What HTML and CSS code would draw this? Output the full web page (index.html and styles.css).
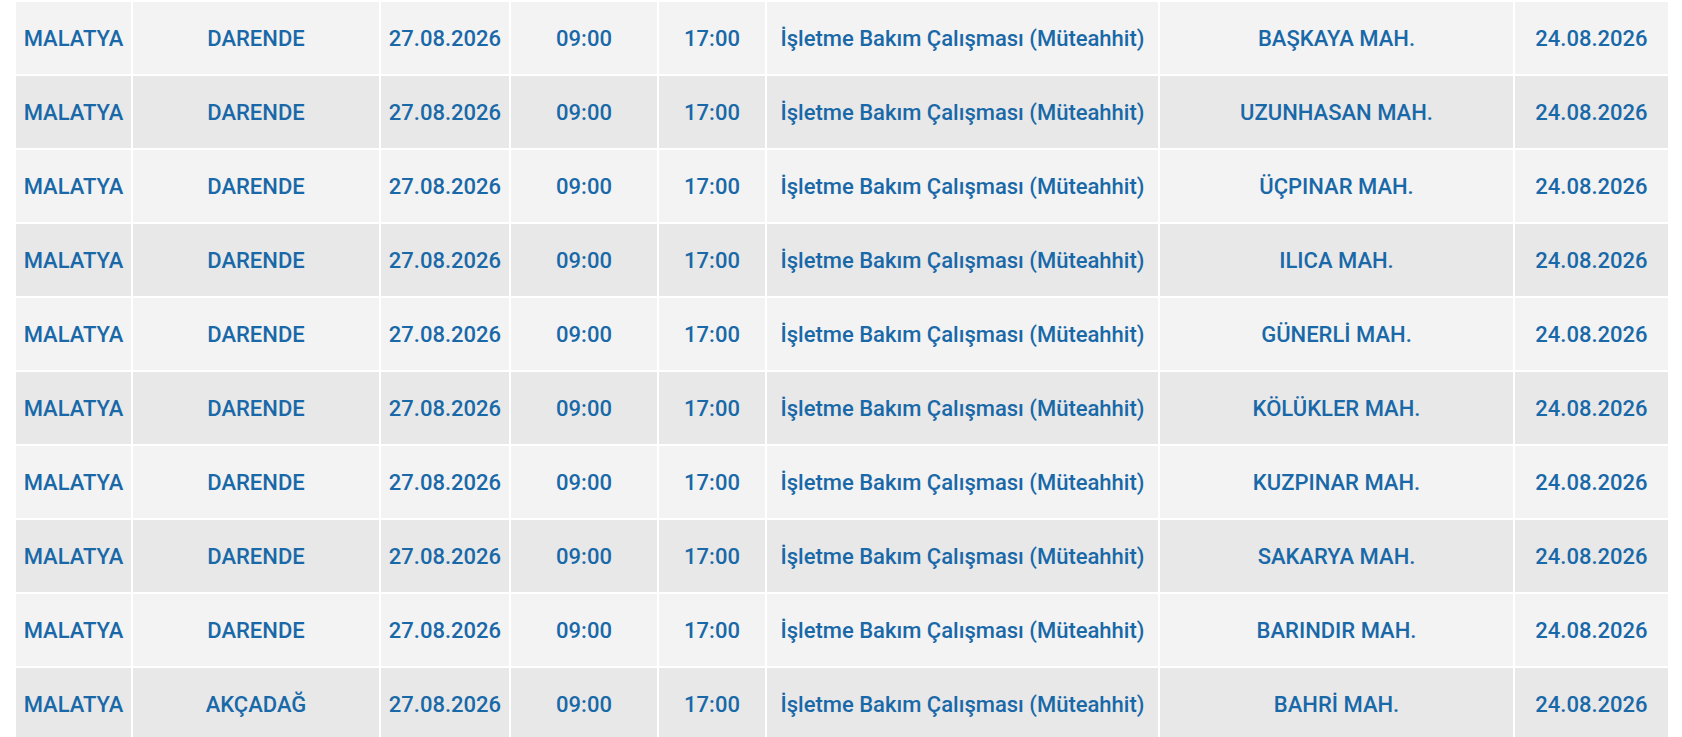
FILE: index.html
```html
<!DOCTYPE html>
<html lang="tr">
<head>
<meta charset="utf-8">
<title>Planlı Kesintiler</title>
<link rel="stylesheet" href="styles.css">
</head>
<body>
<div class="wrap">
<table class="outages">
<colgroup>
<col class="c-il"><col class="c-ilce"><col class="c-tarih"><col class="c-bas"><col class="c-bit"><col class="c-neden"><col class="c-mah"><col class="c-duyuru">
</colgroup>
<tbody>
<tr><td>MALATYA</td><td>DARENDE</td><td>27.08.2026</td><td>09:00</td><td>17:00</td><td>İşletme Bakım Çalışması (Müteahhit)</td><td>BAŞKAYA MAH.</td><td>24.08.2026</td></tr>
<tr><td>MALATYA</td><td>DARENDE</td><td>27.08.2026</td><td>09:00</td><td>17:00</td><td>İşletme Bakım Çalışması (Müteahhit)</td><td>UZUNHASAN MAH.</td><td>24.08.2026</td></tr>
<tr><td>MALATYA</td><td>DARENDE</td><td>27.08.2026</td><td>09:00</td><td>17:00</td><td>İşletme Bakım Çalışması (Müteahhit)</td><td>ÜÇPINAR MAH.</td><td>24.08.2026</td></tr>
<tr><td>MALATYA</td><td>DARENDE</td><td>27.08.2026</td><td>09:00</td><td>17:00</td><td>İşletme Bakım Çalışması (Müteahhit)</td><td>ILICA MAH.</td><td>24.08.2026</td></tr>
<tr><td>MALATYA</td><td>DARENDE</td><td>27.08.2026</td><td>09:00</td><td>17:00</td><td>İşletme Bakım Çalışması (Müteahhit)</td><td>GÜNERLİ MAH.</td><td>24.08.2026</td></tr>
<tr><td>MALATYA</td><td>DARENDE</td><td>27.08.2026</td><td>09:00</td><td>17:00</td><td>İşletme Bakım Çalışması (Müteahhit)</td><td>KÖLÜKLER MAH.</td><td>24.08.2026</td></tr>
<tr><td>MALATYA</td><td>DARENDE</td><td>27.08.2026</td><td>09:00</td><td>17:00</td><td>İşletme Bakım Çalışması (Müteahhit)</td><td>KUZPINAR MAH.</td><td>24.08.2026</td></tr>
<tr><td>MALATYA</td><td>DARENDE</td><td>27.08.2026</td><td>09:00</td><td>17:00</td><td>İşletme Bakım Çalışması (Müteahhit)</td><td>SAKARYA MAH.</td><td>24.08.2026</td></tr>
<tr><td>MALATYA</td><td>DARENDE</td><td>27.08.2026</td><td>09:00</td><td>17:00</td><td>İşletme Bakım Çalışması (Müteahhit)</td><td>BARINDIR MAH.</td><td>24.08.2026</td></tr>
<tr><td>MALATYA</td><td>AKÇADAĞ</td><td>27.08.2026</td><td>09:00</td><td>17:00</td><td>İşletme Bakım Çalışması (Müteahhit)</td><td>BAHRİ MAH.</td><td>24.08.2026</td></tr>
</tbody>
</table>
</div>
</body>
</html>
```
FILE: styles.css
```css
html, body {
  margin: 0;
  padding: 0;
  background: #ffffff;
}
body {
  font-family: Roboto, "Liberation Sans", Arial, sans-serif;
  overflow: hidden;
}
.wrap {
  padding: 0 0 0 14px;
}
.outages {
  table-layout: fixed;
  width: 1656px;
  border-collapse: separate;
  border-spacing: 2px;
  background: #ffffff;
}
.c-il { width: 115px; }
.c-ilce { width: 246px; }
.c-tarih { width: 128px; }
.c-bas { width: 146px; }
.c-bit { width: 106px; }
.c-neden { width: 391px; }
.c-mah { width: 353px; }
.c-duyuru { width: 153px; }
.outages td {
  height: 72px;
  padding: 0;
  text-align: center;
  vertical-align: middle;
  font-size: 22px;
  font-weight: 500;
  color: #1968a8;
  white-space: nowrap;
  background: #f3f3f3;
}
.outages tr:nth-child(even) td {
  background: #e8e8e8;
}
```
